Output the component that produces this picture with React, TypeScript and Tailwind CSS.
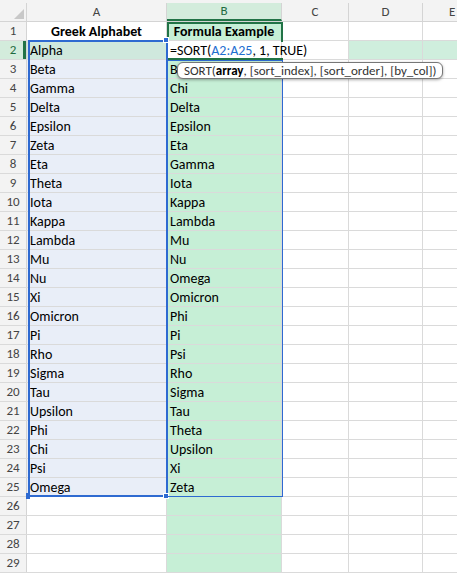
import React from 'react';

const colA = ['Greek Alphabet','Alpha','Beta','Gamma','Delta','Epsilon','Zeta','Eta','Theta','Iota','Kappa','Lambda','Mu','Nu','Xi','Omicron','Pi','Rho','Sigma','Tau','Upsilon','Phi','Chi','Psi','Omega'];
const colB = ['Formula Example','','B','Chi','Delta','Epsilon','Eta','Gamma','Iota','Kappa','Lambda','Mu','Nu','Omega','Omicron','Phi','Pi','Psi','Rho','Sigma','Tau','Theta','Upsilon','Xi','Zeta'];

export default function App() {
  const rows = Array.from({ length: 29 }, (_, i) => i + 1);
  return (
    <div className="relative w-[457px] h-[578px] overflow-hidden bg-white text-[14px] text-black" style={{ fontFamily: 'Calibri, "Liberation Sans", "Open Sans", sans-serif' }}>
      {/* column headers */}
      <div className="flex h-[22px] bg-[#f3f3f3] border-b border-[#d4d4d4] pt-[3px] text-[13px] text-[#444]">
        <div className="w-[27px] border-r border-[#d4d4d4] relative">
          <div className="absolute right-[2px] bottom-[2px] w-0 h-0 border-l-[10px] border-l-transparent border-b-[10px] border-b-[#c8c8c8]" />
        </div>
        <div className="w-[140px] flex items-center justify-center border-r border-[#d4d4d4]">A</div>
        <div className="w-[115px] flex items-center justify-center border-r border-[#d4d4d4] bg-[#d3ecdc] border-b-2 border-b-[#217346] text-[#1e6b3f]">B</div>
        <div className="w-[67px] flex items-center justify-center border-r border-[#d4d4d4]">C</div>
        <div className="w-[74px] flex items-center justify-center border-r border-[#d4d4d4]">D</div>
        <div className="flex-1 flex items-center pl-[26px]">E</div>
      </div>
      {rows.map((r) => {
        const i = r - 1;
        const a = colA[i] ?? '';
        const b = colB[i] ?? '';
        const aBg = r === 2 ? 'bg-[#cfe8dd]' : r >= 3 && r <= 25 ? 'bg-[#e9eef8]' : 'bg-white';
        return (
          <div key={r} className="flex h-[19px] border-b border-[#dadada]">
            <div className={`w-[27px] flex items-center justify-center border-r border-[#d4d4d4] text-[13px] relative ${r === 2 ? 'bg-[#d3ecdc] text-[#1e6b3f]' : 'bg-[#f3f3f3] text-[#444]'}`}>
              {r === 2 && <div className="absolute right-0 top-0 bottom-0 w-[3px] bg-[#217346]" />}
              {r}
            </div>
            <div className={`w-[140px] flex items-center px-[3px] border-r border-[#dadada] ${aBg} ${r === 1 ? 'justify-center font-bold' : ''}`}>{a}</div>
            <div className={`w-[115px] flex items-center px-[3px] border-r border-[#dadada] ${r === 2 ? 'bg-white' : 'bg-[#c6efd6]'} ${r === 1 ? 'justify-center font-bold' : ''}`}>{b}</div>
            <div className={`w-[67px] border-r border-[#dadada] ${r === 2 ? 'bg-white' : ''}`} />
            <div className={`w-[74px] border-r border-[#dadada] ${r === 2 ? 'bg-[#cfeedd]' : ''}`} />
            <div className={`flex-1 ${r === 2 ? 'bg-[#cfeedd]' : ''}`} />
          </div>
        );
      })}
      {/* formula text overflow in B2 */}
      <div className="absolute left-[170px] top-[41px] h-[19px] flex items-center whitespace-nowrap">
        =SORT(<span className="text-[#1f6fd1]">A2:A25</span>, 1, TRUE)
      </div>
      {/* header B1 green border */}
      <div className="absolute left-[167px] top-[22px] w-[116px] h-[20px] border-2 border-b-0 border-[#217346] pointer-events-none" />
      {/* active cell B2 */}
      <div className="absolute left-[167px] top-[58px] w-[116px] h-[3px] bg-[#217346]" />
      {/* A2:A25 range border */}
      <div className="absolute left-[28px] top-[40px] w-[139px] h-[457px] border-2 border-[#2e6ad1] border-r-0" />
      <div className="absolute left-[166px] top-[40px] w-[2px] h-[457px] bg-[#2e6ad1]" />
      <div className="absolute left-[163px] top-[37px] w-[6px] h-[6px] bg-[#2e6ad1] border border-white" />
      <div className="absolute left-[163px] top-[493px] w-[6px] h-[6px] bg-[#2e6ad1] border border-white" />
      <div className="absolute left-[26px] top-[493px] w-[4px] h-[6px] bg-[#2e6ad1]" />
      {/* B3:B25 border */}
      <div className="absolute left-[168px] top-[60px] w-[115px] h-[437px] border border-[#2e6ad1] border-l-0" />
      {/* tooltip */}
      <div className="absolute left-[177px] top-[62px] h-[17px] px-[6px] flex items-center whitespace-nowrap bg-white border border-[#777] rounded-[6px] shadow-[0_1px_3px_rgba(0,0,0,0.35)] text-[13px] text-[#333]">
        SORT(<b className="text-black">array</b>, [sort_index], [sort_order], [by_col])
      </div>
    </div>
  );
}
